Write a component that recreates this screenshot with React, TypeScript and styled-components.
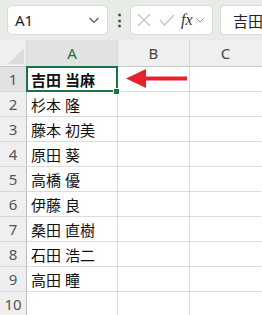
import styled, { createGlobalStyle } from 'styled-components';

const GlobalStyle = createGlobalStyle`
  html, body { margin: 0; padding: 0; background: #fff; }
  body { font-family: "Noto Sans", "Noto Sans CJK JP", sans-serif; overflow: hidden; }
`;

const names = [
  '吉田 当麻',
  '杉本 隆',
  '藤本 初美',
  '原田 葵',
  '高橋 優',
  '伊藤 良',
  '桑田 直樹',
  '石田 浩二',
  '高田 瞳',
  '',
];

export default function App() {
  return (
    <Page>
      <GlobalStyle />
      <Toolbar>
        <NameBox>
          <span>A1</span>
          <Chevron size={12} color="#555" />
        </NameBox>
        <Dots>⋮</Dots>
        <FormulaTools>
          <svg width="14" height="14" viewBox="0 0 14 14">
            <path d="M1 1 L13 13 M13 1 L1 13" stroke="#c4c4c4" strokeWidth="1.2" fill="none" />
          </svg>
          <svg width="16" height="14" viewBox="0 0 16 14">
            <path d="M1 7 L5.5 12 L15 2" stroke="#c4c4c4" strokeWidth="1.2" fill="none" />
          </svg>
          <Fx>fx</Fx>
          <Chevron size={10} color="#888" />
        </FormulaTools>
        <FormulaInput>吉田 当麻</FormulaInput>
      </Toolbar>

      <Sheet>
        <Corner>
          <svg width="16" height="16" viewBox="0 0 16 16">
            <path d="M16 0 L16 16 L0 16 Z" fill="#dcdcdc" />
          </svg>
        </Corner>
        <ColHead $active>A</ColHead>
        <ColHead>B</ColHead>
        <ColHead $last>C</ColHead>

        {names.map((name, i) => (
          <Row key={i}>
            <RowHead $active={i === 0}>{i + 1}</RowHead>
            <Cell $bold={i === 0} $selected={i === 0}>
              {name}
              {i === 0 && <Handle />}
            </Cell>
            <Cell>
              {i === 0 && (
                <Arrow width="62" height="20" viewBox="0 0 62 20">
                  <path d="M0 9.5 L20 0 L20 7.5 L61 7.5 L61 11.5 L20 11.5 L20 19 Z" fill="#e8202a" />
                </Arrow>
              )}
            </Cell>
            <Cell $last />
          </Row>
        ))}
      </Sheet>
    </Page>
  );
}

function Chevron({ size, color }: { size: number; color: string }) {
  return (
    <svg width={size} height={size} viewBox="0 0 12 12">
      <path d="M1.5 4 L6 8.5 L10.5 4" stroke={color} strokeWidth="1.2" fill="none" />
    </svg>
  );
}

const Page = styled.div`
  width: 262px;
  height: 315px;
  overflow: hidden;
`;

const Toolbar = styled.div`
  height: 40px;
  background: #e7ede6;
  display: flex;
  align-items: flex-start;
  padding: 5px 0 0 7px;
  box-sizing: border-box;
`;

const Box = styled.div`
  height: 30px;
  box-sizing: border-box;
  background: #fff;
  border: 1px solid #d6dbd5;
  border-radius: 5px;
  display: flex;
  align-items: center;
`;

const NameBox = styled(Box)`
  width: 101px;
  padding: 0 7px 0 7px;
  justify-content: space-between;
  font-size: 15px;
  color: #222;
`;

const Dots = styled.div`
  width: 22px;
  text-align: center;
  font-size: 17px;
  font-weight: bold;
  line-height: 30px;
  color: #444;
`;

const FormulaTools = styled(Box)`
  width: 83px;
  padding: 0 4px 0 6px;
  gap: 8px;
`;

const Fx = styled.span`
  font-family: "Liberation Serif", "DejaVu Serif", serif;
  font-style: italic;
  font-size: 16px;
  color: #333;
  margin-left: -2px;
  margin-right: -6px;
  line-height: 1;
`;

const FormulaInput = styled(Box)`
  margin-left: 7px;
  flex: 1;
  border-right: none;
  border-radius: 5px 0 0 5px;
  padding-left: 12px;
  font-size: 15px;
  color: #222;
  white-space: nowrap;
  overflow: hidden;
`;

const Sheet = styled.div`
  display: grid;
  grid-template-columns: 27px 91px 72px 72px;
  grid-auto-rows: 25px;
  grid-template-rows: 27px;
`;

const Row = styled.div`
  display: contents;
`;

const Corner = styled.div`
  background: #efefef;
  border-right: 1px solid #d8d8d8;
  border-bottom: 1px solid #c8c8c8;
  display: flex;
  align-items: flex-end;
  justify-content: flex-end;
  padding: 0 2px 2px 0;
`;

const ColHead = styled.div<{ $active?: boolean; $last?: boolean }>`
  background: ${(p) => (p.$active ? '#e1e1e1' : '#efefef')};
  color: ${(p) => (p.$active ? '#1e7145' : '#444')};
  border-right: 1px solid ${(p) => (p.$last ? 'transparent' : '#d8d8d8')};
  border-bottom: 1px solid #c8c8c8;
  display: flex;
  align-items: center;
  justify-content: center;
  font-size: 15px;
`;

const RowHead = styled.div<{ $active?: boolean }>`
  background: ${(p) => (p.$active ? '#e1e1e1' : '#efefef')};
  color: ${(p) => (p.$active ? '#1e7145' : '#555')};
  border-right: 1px solid #bdbdbd;
  border-bottom: 1px solid #d8d8d8;
  display: flex;
  align-items: center;
  justify-content: center;
  font-size: 15px;
`;

const Cell = styled.div<{ $bold?: boolean; $selected?: boolean; $last?: boolean }>`
  position: relative;
  border-right: 1px solid ${(p) => (p.$last ? 'transparent' : '#dcdcdc')};
  border-bottom: 1px solid #dcdcdc;
  display: flex;
  align-items: center;
  padding-left: 4px;
  font-size: 15px;
  font-weight: ${(p) => (p.$bold ? 700 : 400)};
  color: #111;
  white-space: nowrap;

  ${(p) =>
    p.$selected &&
    `
    &::after {
      content: '';
      position: absolute;
      left: -1px;
      top: -1px;
      right: -1px;
      bottom: -1px;
      border: 2px solid #1e7145;
      pointer-events: none;
    }
  `}
`;

const Handle = styled.span`
  position: absolute;
  right: -3px;
  bottom: -4px;
  width: 5px;
  height: 5px;
  background: #1e7145;
  border: 1px solid #fff;
  z-index: 1;
`;

const Arrow = styled.svg`
  position: absolute;
  left: 8px;
  top: 2px;
`;
